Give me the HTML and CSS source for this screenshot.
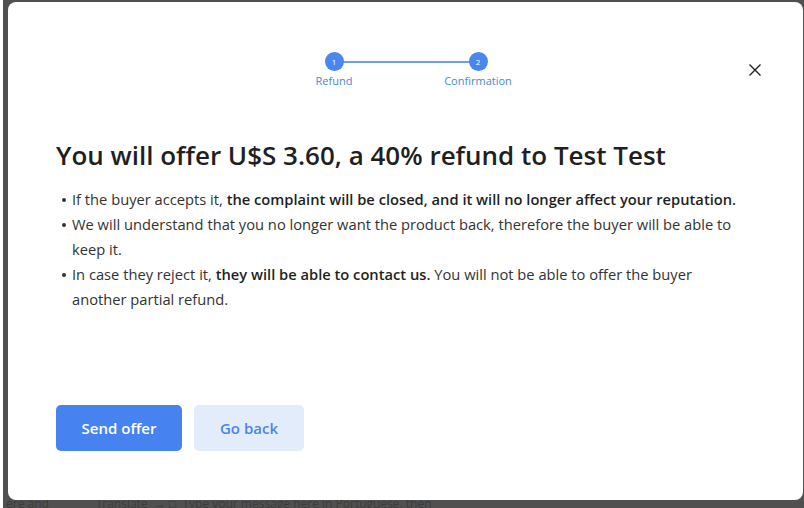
FILE: index.html
```html
<!DOCTYPE html>
<html>
<head>
<meta charset="utf-8">
<link rel="stylesheet" href="styles.css">
</head>
<body>
<div class="backdrop-text">ere and &nbsp;&nbsp;&nbsp;&nbsp;&nbsp;&nbsp;&nbsp;&nbsp;&nbsp;&nbsp;&nbsp;&nbsp;&nbsp; Translate &nbsp;→ □ &nbsp;Type your message here in Portuguese, then</div>
<div class="modal">
  <button class="close" aria-label="Close">
    <svg width="14" height="14" viewBox="0 0 14 14"><path d="M1.5 1.5 L12.5 12.5 M12.5 1.5 L1.5 12.5" stroke="#222" stroke-width="1.4" fill="none"/></svg>
  </button>
  <div class="stepper">
    <div class="step">
      <span class="dot">1</span>
      <span class="label">Refund</span>
    </div>
    <div class="step">
      <span class="dot">2</span>
      <span class="label">Confirmation</span>
    </div>
  </div>
  <h1 class="title">You will offer U$S 3.60, a 40% refund to Test Test</h1>
  <ul class="points">
    <li>If the buyer accepts it, <b>the complaint will be closed, and it will no longer affect your reputation.</b></li>
    <li>We will understand that you no longer want the product back, therefore the buyer will be able to keep it.</li>
    <li>In case they reject it, <b>they will be able to contact us.</b> You will not be able to offer the buyer another partial refund.</li>
  </ul>
  <div class="actions">
    <button class="btn primary">Send offer</button>
    <button class="btn secondary">Go back</button>
  </div>
</div>
</body>
</html>
```
FILE: styles.css
```css
html, body {
  margin: 0;
  padding: 0;
}
body {
  width: 804px;
  height: 508px;
  overflow: hidden;
  background: linear-gradient(to right, #ffffff 3px, #505050 3px);
  font-family: "Open Sans", "Liberation Sans", sans-serif;
  position: relative;
}
.backdrop-text {
  position: absolute;
  left: 6px;
  top: 499px;
  font-size: 12px;
  line-height: 9px;
  color: #3c3c3c;
  white-space: nowrap;
}
.modal {
  position: absolute;
  left: 8px;
  top: 2px;
  width: 795px;
  height: 498px;
  background: #fff;
  border-radius: 8px;
  box-sizing: border-box;
  padding: 50px 47px 49px 48px;
  display: flex;
  flex-direction: column;
}
.close {
  position: absolute;
  top: 61px;
  right: 41px;
  width: 14px;
  height: 14px;
  padding: 0;
  border: 0;
  background: none;
  display: flex;
}
.stepper {
  align-self: center;
  display: flex;
  gap: 64px;
  position: relative;
}
.stepper::before {
  content: "";
  position: absolute;
  left: 40px;
  right: 40px;
  top: 9px;
  height: 2px;
  background: #6c9cf3;
}
.step {
  width: 80px;
  display: flex;
  flex-direction: column;
  align-items: center;
  position: relative;
}
.dot {
  width: 19px;
  height: 19px;
  border-radius: 50%;
  background: #4a86f0;
  color: #fff;
  font-size: 8px;
  line-height: 19px;
  text-align: center;
}
.label {
  margin-top: 2px;
  font-size: 11px;
  color: #4a86e8;
  line-height: 15px;
}
.title {
  margin: 51px 0 0 0;
  font-size: 26px;
  font-weight: 600;
  color: #1f1f1f;
  line-height: 32px;
  letter-spacing: 0;
}
.points {
  margin: 16px 14px 0 0;
  padding: 0 0 0 16px;
  list-style: none;
  font-size: 14.7px;
  line-height: 25px;
  color: #333;
}
.points li {
  position: relative;
}
.points li::before {
  content: "";
  position: absolute;
  left: -10px;
  top: 11px;
  width: 4px;
  height: 4px;
  border-radius: 50%;
  background: #333;
}
.points b {
  font-weight: 600;
  color: #1f1f1f;
}
.actions {
  margin-top: auto;
  display: flex;
  gap: 12px;
}
.btn {
  height: 46px;
  border: 0;
  border-radius: 5px;
  font-family: inherit;
  font-size: 15px;
  font-weight: 600;
  padding: 0;
}
.primary {
  width: 126px;
  background: #4782f1;
  color: #fff;
}
.secondary {
  width: 110px;
  background: #e3ecfa;
  color: #4a86e8;
}
```
